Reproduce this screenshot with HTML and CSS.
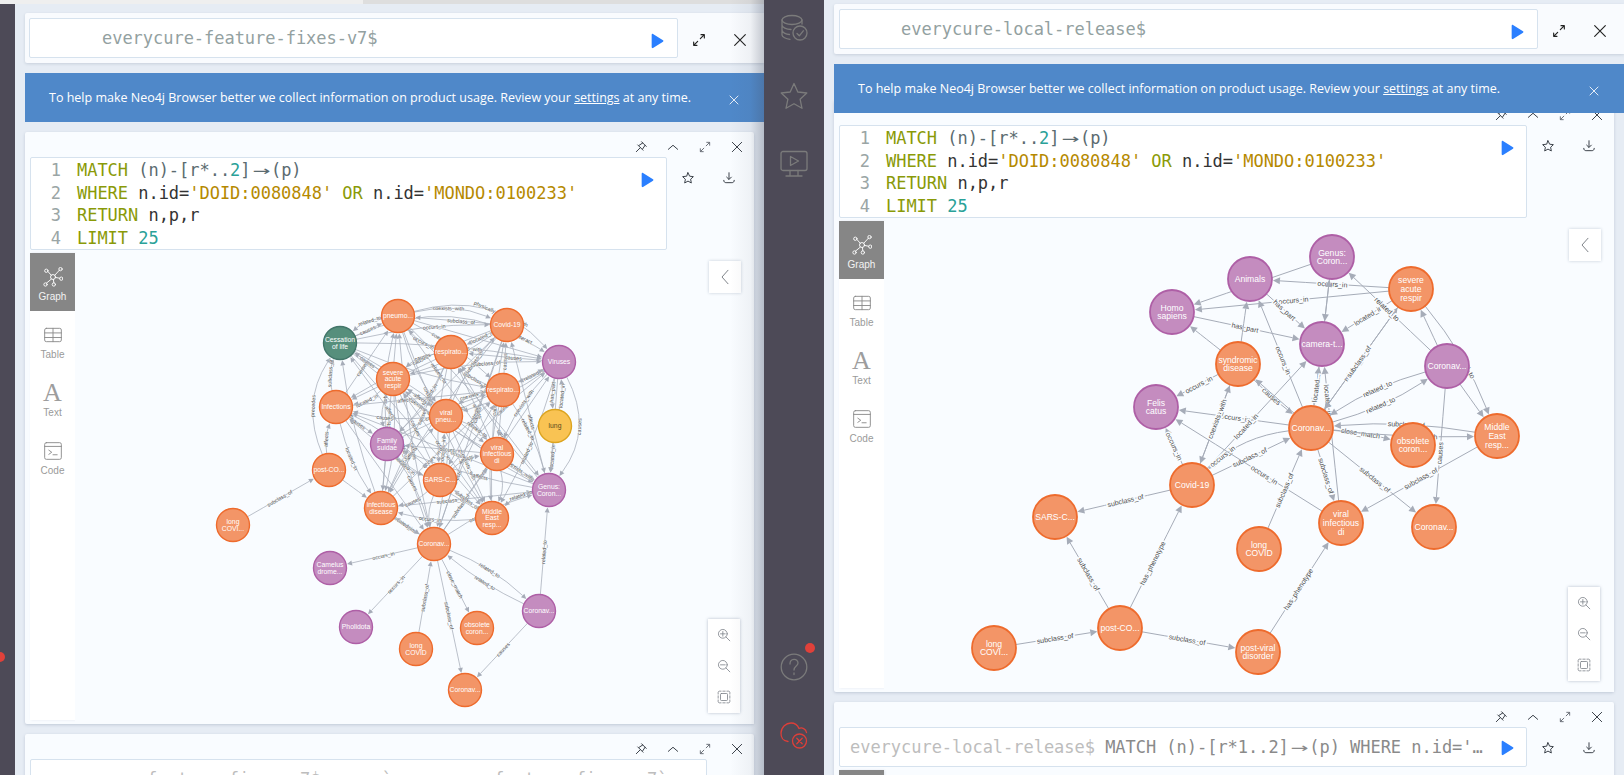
FILE: index.html
```html
<!DOCTYPE html>
<html lang="en">
<head>
  <meta charset="UTF-8">
  <title>Neo4j Browser</title>
  <link rel="stylesheet" href="styles.css">
</head>
<body>

<!-- shared icons -->
<svg class="icon-defs">
  <symbol id="i-pin" viewBox="0 0 24 24"><path d="M13 3l8 8M15 5l-6 4M19 9l-4 6M6.500 8.500l9 9M11 13l-7 7"/></symbol>
  <symbol id="i-up" viewBox="0 0 24 24"><path d="M4 16l8-7 8 7"/></symbol>
  <symbol id="i-expand" viewBox="0 0 24 24"><path d="M14 10l6-6M15 4h5v5M10 14l-6 6M4 15v5h5"/></symbol>
  <symbol id="i-close" viewBox="0 0 24 24"><path d="M4 4l16 16M20 4L4 20"/></symbol>
  <symbol id="i-play" viewBox="0 0 24 24"><path class="solid" d="M4 2.500c0-1 1-1.500 2-1l15 9.500c.8.500.8 1.500 0 2L6 22.500c-1 .5-2 0-2-1z"/></symbol>
  <symbol id="i-star" viewBox="0 0 24 24"><path d="M12 3l2.800 5.900 6.400.8-4.700 4.400 1.200 6.400L12 17.300l-5.700 3.200 1.200-6.400-4.700-4.400 6.400-.8z"/></symbol>
  <symbol id="i-down" viewBox="0 0 24 24"><path d="M12 3v11M8 10.500l4 4 4-4M3 16c0 3 2 4 4 4h10c2 0 4-1 4-4"/></symbol>
  <symbol id="i-zoomin" viewBox="0 0 24 24"><circle cx="10" cy="10" r="7.500"/><path d="M15.500 15.500L22 22M6 10h8M10 6v8"/></symbol>
  <symbol id="i-zoomout" viewBox="0 0 24 24"><circle cx="10" cy="10" r="7.500"/><path d="M15.500 15.500L22 22M6 10h8"/></symbol>
  <symbol id="i-fit" viewBox="0 0 24 24"><rect x="6" y="6" width="12" height="12" rx="1.500"/><path d="M2 7V4c0-1 1-2 2-2h3M17 2h3c1 0 2 1 2 2v3M22 17v3c0 1-1 2-2 2h-3M7 22H4c-1 0-2-1-2-2v-3M10 2h4M10 22h4M2 10v4M22 10v4"/></symbol>
  <symbol id="i-graph" viewBox="0 0 24 24"><circle cx="12" cy="12" r="3"/><circle cx="4" cy="4.500" r="2"/><circle cx="21" cy="2.500" r="2"/><circle cx="22" cy="14" r="2"/><circle cx="13" cy="21" r="2"/><circle cx="3" cy="21" r="2"/><path d="M6 5.500l4 4.500M14 10l6-6.500M15 12.500l5 1M12.500 15l.5 4M10 14.500l-6 5"/></symbol>
  <symbol id="i-table" viewBox="0 0 24 24"><rect x="2" y="4" width="20" height="16" rx="2"/><path d="M2 9.500h20M2 15h20M12 4v16"/></symbol>
  <symbol id="i-code" viewBox="0 0 24 24"><rect x="2" y="2" width="20" height="20" rx="2"/><path d="M2 6.500h20M7 11l3.500 2.500L7 16M12 16.500h5"/></symbol>
  <symbol id="i-back" viewBox="0 0 24 24"><path d="M16 3L8 12l8 9"/></symbol>
  <symbol id="i-db" viewBox="0 0 28 28"><ellipse cx="12" cy="6" rx="10" ry="4.500"/><path d="M2 6v15c0 2 4 4 8 4.300M22 6v4M2 11c0 2.500 4.500 4.500 9 4.500M2 16c0 2.500 4 4.500 7.500 4.500"/><circle cx="20" cy="19" r="7"/><path d="M17 19.500l2.300 2.300 4-5"/></symbol>
  <symbol id="i-fav" viewBox="0 0 28 28"><path d="M14 1.500l3.800 8.500 9 1-6.700 6.200 1.900 9.100L14 21.700l-8 4.600 1.900-9.100-6.700-6.200 9-1z"/></symbol>
  <symbol id="i-screen" viewBox="0 0 28 28"><rect x="1" y="1.500" width="26" height="19" rx="2"/><path d="M10.500 6.500l8 4.500-8 4.500zM10 20.500v5M18 20.500v5M6 26h16"/></symbol>
  <symbol id="i-help" viewBox="0 0 28 28"><circle cx="14" cy="14" r="12.800"/><path d="M10 11c0-6 8-6 8-1 0 3-4 3-4 7M14 20v1.500"/></symbol>
  <symbol id="i-offline" viewBox="0 0 28 28"><path d="M8 20.500C3 20 0.800 16 1 12 1.300 6 6 2 11 2c3.500 0 6.500 2 8 5.500 3-1.500 7 .5 7.500 4"/><circle cx="19.500" cy="20" r="7"/><path d="M16.800 17.300l5.400 5.400M22.200 17.300l-5.400 5.400"/></symbol>
</svg>

<div class="screen">

  <!-- left browser window -->
  <section class="window window-left">
    <div class="topstrip"></div>
    <div class="window-body">
      <div class="rail"><span class="rail-dot"></span></div>
      <main class="stream">
        <div class="cmdbar">
          <div class="cmd-input"><span class="prompt">everycure-feature-fixes-v7$</span><svg class="ico play"><use href="#i-play"/></svg></div>
          <div class="cmd-actions">
            <svg class="ico"><use href="#i-expand"/></svg>
            <svg class="ico"><use href="#i-close"/></svg>
          </div>
        </div>
        <div class="banner">
          <p>To help make Neo4j Browser better we collect information on product usage. Review your <a href="#">settings</a> at any time.</p>
          <svg class="ico banner-x"><use href="#i-close"/></svg>
        </div>

        <article class="card">
          <div class="card-head">
            <svg class="ico"><use href="#i-pin"/></svg>
            <svg class="ico"><use href="#i-up"/></svg>
            <svg class="ico faint"><use href="#i-expand"/></svg>
            <svg class="ico"><use href="#i-close"/></svg>
          </div>
          <div class="editor-row">
            <div class="editor">
              <div class="line"><span class="ln">1</span><span class="kw">MATCH</span> <span class="pn">(n)-[r*..<span class="num">2</span>]<span class="arrow">→</span>(p)</span></div>
              <div class="line"><span class="ln">2</span><span class="kw">WHERE</span> n.id=<span class="str">'DOID:0080848'</span> <span class="kw">OR</span> n.id=<span class="str">'MONDO:0100233'</span></div>
              <div class="line"><span class="ln">3</span><span class="kw">RETURN</span> n,p,r</div>
              <div class="line"><span class="ln">4</span><span class="kw">LIMIT</span> <span class="num">25</span></div>
              <svg class="ico play"><use href="#i-play"/></svg>
            </div>
            <div class="editor-actions">
              <svg class="ico"><use href="#i-star"/></svg>
              <svg class="ico"><use href="#i-down"/></svg>
            </div>
          </div>
          <div class="result">
            <nav class="tabs">
              <div class="tab active"><svg class="ico"><use href="#i-graph"/></svg><span>Graph</span></div>
              <div class="tab"><svg class="ico"><use href="#i-table"/></svg><span>Table</span></div>
              <div class="tab"><span class="tab-a">A</span><span>Text</span></div>
              <div class="tab"><svg class="ico"><use href="#i-code"/></svg><span>Code</span></div>
            </nav>
            <div class="viz">
              <svg class="graph" id="graphLeft" viewBox="75 253 679 471"></svg>
              <button class="side-toggle"><svg class="ico"><use href="#i-back"/></svg></button>
              <div class="zoom-box">
                <svg class="ico"><use href="#i-zoomin"/></svg>
                <svg class="ico"><use href="#i-zoomout"/></svg>
                <svg class="ico"><use href="#i-fit"/></svg>
              </div>
            </div>
          </div>
        </article>

        <article class="card card-tail">
          <div class="card-head">
            <svg class="ico"><use href="#i-pin"/></svg>
            <svg class="ico"><use href="#i-up"/></svg>
            <svg class="ico faint"><use href="#i-expand"/></svg>
            <svg class="ico"><use href="#i-close"/></svg>
          </div>
          <div class="editor single wide">
            <span class="prompt-dim">everycure-feature-fixes-v7$</span> :use `everycure-feature-fixes-v7`
          </div>
        </article>
      </main>
    </div>
  </section>

  <!-- dark sidebar of the right window -->
  <aside class="sidebar">
    <div class="side-group">
      <svg class="side-ico"><use href="#i-db"/></svg>
      <svg class="side-ico"><use href="#i-fav"/></svg>
      <svg class="side-ico"><use href="#i-screen"/></svg>
    </div>
    <div class="side-group bottom">
      <div class="help"><svg class="side-ico"><use href="#i-help"/></svg><span class="help-dot"></span></div>
      <svg class="side-ico red"><use href="#i-offline"/></svg>
    </div>
  </aside>

  <!-- right browser window -->
  <section class="window window-right">
    <main class="stream">
      <div class="cmdbar">
        <div class="cmd-input"><span class="prompt">everycure-local-release$</span><svg class="ico play"><use href="#i-play"/></svg></div>
        <div class="cmd-actions">
          <svg class="ico"><use href="#i-expand"/></svg>
          <svg class="ico"><use href="#i-close"/></svg>
        </div>
      </div>
      <div class="banner">
        <p>To help make Neo4j Browser better we collect information on product usage. Review your <a href="#">settings</a> at any time.</p>
        <svg class="ico banner-x"><use href="#i-close"/></svg>
      </div>

      <article class="card">
        <div class="card-head">
          <svg class="ico"><use href="#i-pin"/></svg>
          <svg class="ico"><use href="#i-up"/></svg>
          <svg class="ico faint"><use href="#i-expand"/></svg>
          <svg class="ico"><use href="#i-close"/></svg>
        </div>
        <div class="editor-row">
          <div class="editor">
            <div class="line"><span class="ln">1</span><span class="kw">MATCH</span> <span class="pn">(n)-[r*..<span class="num">2</span>]<span class="arrow">→</span>(p)</span></div>
            <div class="line"><span class="ln">2</span><span class="kw">WHERE</span> n.id=<span class="str">'DOID:0080848'</span> <span class="kw">OR</span> n.id=<span class="str">'MONDO:0100233'</span></div>
            <div class="line"><span class="ln">3</span><span class="kw">RETURN</span> n,p,r</div>
            <div class="line"><span class="ln">4</span><span class="kw">LIMIT</span> <span class="num">25</span></div>
            <svg class="ico play"><use href="#i-play"/></svg>
          </div>
          <div class="editor-actions">
            <svg class="ico"><use href="#i-star"/></svg>
            <svg class="ico"><use href="#i-down"/></svg>
          </div>
        </div>
        <div class="result">
          <nav class="tabs">
            <div class="tab active"><svg class="ico"><use href="#i-graph"/></svg><span>Graph</span></div>
            <div class="tab"><svg class="ico"><use href="#i-table"/></svg><span>Table</span></div>
            <div class="tab"><span class="tab-a">A</span><span>Text</span></div>
            <div class="tab"><svg class="ico"><use href="#i-code"/></svg><span>Code</span></div>
          </nav>
          <div class="viz">
            <svg class="graph" id="graphRight" viewBox="884 221 730 471"></svg>
            <button class="side-toggle"><svg class="ico"><use href="#i-back"/></svg></button>
            <div class="zoom-box">
              <svg class="ico"><use href="#i-zoomin"/></svg>
              <svg class="ico"><use href="#i-zoomout"/></svg>
              <svg class="ico"><use href="#i-fit"/></svg>
            </div>
          </div>
        </div>
      </article>

      <article class="card card-tail">
        <div class="card-head">
          <svg class="ico"><use href="#i-pin"/></svg>
          <svg class="ico"><use href="#i-up"/></svg>
          <svg class="ico faint"><use href="#i-expand"/></svg>
          <svg class="ico"><use href="#i-close"/></svg>
        </div>
        <div class="editor-row">
          <div class="editor single">
            <span class="prompt-dim">everycure-local-release$</span> MATCH (n)-[r*1..2]<span class="arrow">→</span>(p) WHERE n.id='…
            <svg class="ico play"><use href="#i-play"/></svg>
          </div>
          <div class="editor-actions">
            <svg class="ico"><use href="#i-star"/></svg>
            <svg class="ico"><use href="#i-down"/></svg>
          </div>
        </div>
        <div class="result"><nav class="tabs"><div class="tab active"></div></nav></div>
      </article>
    </main>
  </section>
</div>

<script src="graph.js"></script>
</body>
</html>
```

FILE: styles.css
```css
* {
  box-sizing: border-box;
}

html, body {
  margin: 0;
  padding: 0;
  height: 775px;
  overflow: hidden;
}

body {
  font-family: "Liberation Sans", Arial, sans-serif;
  background: #e6ecf4;
}

.icon-defs {
  display: none;
}

.ico {
  width: 14px;
  height: 14px;
  flex: none;
  fill: none;
  stroke: #3a4048;
  stroke-width: 1.7;
  stroke-linecap: round;
  stroke-linejoin: round;
  display: block;
}

.ico.play {
  width: 16px;
  height: 16px;
}

.ico .solid, .solid {
  fill: #2a7fff;
  stroke: none;
}

.screen {
  display: flex;
  width: 1624px;
  height: 775px;
}

.window {
  display: flex;
  flex-direction: column;
  overflow: hidden;
  height: 775px;
}

.window-left {
  width: 764px;
  position: relative;
}

/* shadow the right window throws over the left one */
.window-left::after {
  content: "";
  position: absolute;
  top: 0;
  right: 0;
  bottom: 0;
  width: 34px;
  background: linear-gradient(to right, rgba(70,80,100,0), rgba(70,80,100,0.06) 60%, rgba(70,80,100,0.3));
  pointer-events: none;
  z-index: 5;
}

.window-right {
  width: 800px;
}

.topstrip {
  height: 4px;
  flex: none;
  background: linear-gradient(to right, #efefef 363px, #dedede 363px);
}

.window-body {
  display: flex;
  flex: 1;
  min-height: 0;
}

.rail {
  width: 15px;
  flex: none;
  background: #4d4a57;
  position: relative;
}

.rail-dot {
  position: absolute;
  left: -5px;
  top: 648px;
  width: 10px;
  height: 10px;
  border-radius: 50%;
  background: #e0413a;
}

.stream {
  flex: 1;
  min-width: 0;
  padding: 4px 0 0 10px;
  background: #e6ecf4;
}

.window-left .stream {
  padding-top: 9px;
}

/* command bar */
.cmdbar {
  display: flex;
  height: 50px;
  padding: 5px 0 5px 4px;
  background: #f9fbfe;
  border-radius: 2px 0 0 2px;
  box-shadow: 0 1px 3px rgba(80,100,130,0.2);
}

.window-right .cmdbar {
  padding-left: 5px;
}

.cmd-input {
  flex: 1;
  display: flex;
  align-items: center;
  justify-content: space-between;
  background: #fff;
  border: 1px solid #d6e2ee;
  border-radius: 2px;
  padding: 0 12px 0 72px;
  height: 40px;
}

.window-right .cmd-input {
  padding-left: 61px;
}

.prompt {
  font-family: "DejaVu Sans Mono", monospace;
  font-size: 17px;
  letter-spacing: -0.03px;
  color: #93a1a1;
}

.cmd-input .play {
  margin-top: 6px;
}

.cmd-actions {
  width: 86px;
  flex: none;
  display: flex;
  gap: 25px;
  padding: 14px 0 0 13px;
}

.cmd-actions .ico {
  width: 16px;
  height: 16px;
  stroke: #222;
}

.banner {
  height: 49px;
  margin-top: 10px;
  padding: 0 22px 0 24px;
  background: #4f88c9;
  color: #fff;
  display: flex;
  align-items: center;
  justify-content: space-between;
  position: relative;
  z-index: 2;
}

.banner p {
  margin: 0;
  font-size: 12.5px;
  font-family: "Open Sans", sans-serif;
}

.banner a {
  color: #fff;
}

.banner-x {
  width: 12px;
  height: 12px;
  margin-top: 5px;
  margin-right: 2px;
  stroke: #fff;
}

/* result frames */
.card {
  margin-top: 10px;
  margin-right: 10px;
  height: 592px;
  padding: 0 0 0 5px;
  background: #f9fcff;
  border-radius: 2px;
  box-shadow: 0 1px 3px rgba(80,100,130,0.25);
}

.window-right .card {
  margin-top: -13px;
}

.window-right .card-tail, .card-tail {
  margin-top: 10px;
}

.card-head {
  height: 25px;
  display: flex;
  justify-content: flex-end;
  align-items: center;
  gap: 18px;
  padding: 5px 10px 0 0;
}

.card-head .ico.faint {
  stroke: #6b7078;
}

.editor-row {
  display: flex;
}

.editor {
  flex: 1;
  min-width: 0;
  position: relative;
  height: 93px;
  padding: 1px 0 0;
  background: #fff;
  border: 1px solid #d6e2ee;
  border-radius: 2px;
  font-family: "DejaVu Sans Mono", monospace;
  font-size: 17px;
  letter-spacing: -0.03px;
  color: #333;
}

.editor .play {
  position: absolute;
  right: 11px;
  top: 14px;
}

.editor-actions {
  width: 87px;
  flex: none;
  display: flex;
  gap: 27px;
  padding: 14px 0 0 14px;
}

.line {
  height: 22.7px;
  line-height: 22.7px;
  white-space: pre;
}

.ln {
  display: inline-block;
  width: 30px;
  margin-right: 16px;
  text-align: right;
  color: #9aa5a5;
}

.kw {
  color: #8a9a08;
}

.str {
  color: #b58900;
}

.num {
  color: #2aa198;
}

.pn {
  color: #5b6b70;
}

.arrow {
  display: inline-block;
  width: 20.4px;
  text-align: center;
  transform: scaleX(1.7);
}

.editor.single {
  height: 40px;
  line-height: 38px;
  padding: 0 0 0 10px;
  white-space: nowrap;
  color: #8a8a8a;
}

.editor.wide {
  flex: none;
  width: 677px;
  padding-left: 14px;
  color: #bdbdbd;
}

.prompt-dim {
  color: #bdbdbd;
}

.card-tail .editor .play {
  top: 12px;
}

.result {
  display: flex;
  height: 471px;
  margin-top: 3px;
}

.tabs {
  width: 45px;
  flex: none;
  height: 467px;
  background: #fff;
  box-shadow: 1px 0 2px rgba(80,100,130,0.12);
}

.tab {
  height: 58px;
  padding-top: 14px;
  display: flex;
  flex-direction: column;
  align-items: center;
  color: #9a9a9a;
  font-size: 10px;
}

.tab span {
  margin-top: 3px;
  line-height: 13px;
}

.tab .ico {
  width: 20px;
  height: 20px;
  stroke: #8a8a8a;
  stroke-width: 1.1;
}

.tab.active {
  background: #868686;
  color: #f3f3f3;
}

.tab.active .ico {
  stroke: #fff;
}

.tab .tab-a {
  margin-top: 0;
  font-family: "Liberation Serif", serif;
  font-size: 26px;
  line-height: 20px;
  height: 20px;
  color: #9d9d9d;
}

.viz {
  flex: 1;
  min-width: 0;
  position: relative;
  background: #f9fcff;
}

.graph {
  display: block;
  width: 100%;
  height: 100%;
}

.side-toggle {
  position: absolute;
  top: 8px;
  right: 13px;
  width: 32px;
  height: 32px;
  padding: 0;
  border: none;
  background: #fff;
  box-shadow: 0 0 3px rgba(80,100,130,0.3);
  display: flex;
  align-items: center;
  justify-content: center;
}

.side-toggle .ico {
  width: 18px;
  height: 18px;
  stroke: #70757c;
  stroke-width: 1.2;
}

.zoom-box {
  position: absolute;
  right: 14px;
  bottom: 11px;
  width: 32px;
  height: 94px;
  background: #fff;
  box-shadow: 0 0 3px rgba(80,100,130,0.4);
  display: flex;
  flex-direction: column;
  align-items: center;
  gap: 17px;
  padding-top: 9px;
}

.zoom-box .ico {
  stroke: #7d8289;
  stroke-width: 1.4;
}

/* dark middle sidebar */
.sidebar {
  width: 60px;
  flex: none;
  background: #4d4a57;
  display: flex;
  flex-direction: column;
  justify-content: space-between;
  position: relative;
  z-index: 6;
}

.side-group {
  display: flex;
  flex-direction: column;
  align-items: center;
  gap: 40px;
  padding-top: 14px;
}

.side-group.bottom {
  padding: 0 0 26px;
}

.side-ico {
  width: 28px;
  height: 28px;
  display: block;
  fill: none;
  stroke: #7b7b7b;
  stroke-width: 1.3;
  stroke-linecap: round;
  stroke-linejoin: round;
}

.side-ico.red {
  stroke: #dd3f39;
}

.help {
  position: relative;
}

.help-dot {
  position: absolute;
  right: -7px;
  top: -10px;
  width: 10px;
  height: 10px;
  border-radius: 50%;
  background: #e0413a;
}

/* graph styling */
.edge {
  fill: none;
  stroke: #a6acb8;
}

.arrowhead {
  fill: #a6acb8;
}

.edge-label {
  fill: #4d4d4d;
  stroke: #f9fcff;
  paint-order: stroke;
  text-anchor: middle;
  dominant-baseline: central;
  font-family: "Liberation Sans", sans-serif;
}

.node-label {
  fill: #fff;
  text-anchor: middle;
  font-family: "Liberation Sans", sans-serif;
}

.node.orange { fill: #f39567; stroke: #ee6b2d; }
.node.purple { fill: #c48cbf; stroke: #ae5fa6; }
.node.green { fill: #568f7c; stroke: #43766a; }
.node.yellow { fill: #f9c353; stroke: #dca41f; }
.node-label.dark { fill: #5a4a1e; }
```

FILE: graph.js
```js
// draws the two Neo4j result graphs from plain node and edge lists
const SVG_NS = 'http://www.w3.org/2000/svg';

function el(name, attrs, parent) {
  const e = document.createElementNS(SVG_NS, name);
  for (const k in attrs) e.setAttribute(k, attrs[k]);
  parent.appendChild(e);
  return e;
}

function unit(dx, dy) {
  const l = Math.hypot(dx, dy) || 1;
  return [dx / l, dy / l];
}

function drawGraph(id, opts, nodes, edges) {
  const svg = document.getElementById(id);
  const r = opts.r;

  edges.forEach(([from, to, label, curve = 0, at = 0.5]) => {
    const a = nodes[from], b = nodes[to];
    const [ux, uy] = unit(b.x - a.x, b.y - a.y);
    const cx = (a.x + b.x) / 2 - uy * curve;
    const cy = (a.y + b.y) / 2 + ux * curve;
    const [sx, sy] = unit(cx - a.x, cy - a.y);
    const [ex, ey] = unit(cx - b.x, cy - b.y);
    const x1 = a.x + sx * r, y1 = a.y + sy * r;
    const tipx = b.x + ex * (r + 1), tipy = b.y + ey * (r + 1);
    const x2 = tipx + ex * opts.arrow, y2 = tipy + ey * opts.arrow;

    el('path', {
      class: 'edge',
      d: `M${x1} ${y1}Q${cx} ${cy} ${x2} ${y2}`,
      'stroke-width': opts.line
    }, svg);

    const w = opts.arrow * 0.5;
    el('polygon', {
      class: 'arrowhead',
      points: `${tipx},${tipy} ${x2 - ey * w},${y2 + ex * w} ${x2 + ey * w},${y2 - ex * w}`
    }, svg);

    if (label) {
      const s = 1 - at;
      const lx = s * s * x1 + 2 * s * at * cx + at * at * x2;
      const ly = s * s * y1 + 2 * s * at * cy + at * at * y2;
      let ang = Math.atan2(s * (cy - y1) + at * (y2 - cy), s * (cx - x1) + at * (x2 - cx)) * 180 / Math.PI;
      if (ang > 90) ang -= 180;
      if (ang < -90) ang += 180;
      const t = el('text', {
        class: 'edge-label',
        x: lx,
        y: ly,
        'font-size': opts.edgeFont,
        'stroke-width': opts.halo,
        transform: `rotate(${ang} ${lx} ${ly})`
      }, svg);
      t.textContent = label;
    }
  });

  Object.values(nodes).forEach(n => {
    el('circle', { class: 'node ' + n.c, cx: n.x, cy: n.y, r: r, 'stroke-width': opts.ring }, svg);
    const lines = n.t.split('|');
    lines.forEach((line, i) => {
      const y = n.y + (i - (lines.length - 1) / 2) * opts.leading + opts.font * 0.36;
      const t = el('text', {
        class: 'node-label' + (n.c === 'yellow' ? ' dark' : ''),
        x: n.x,
        y: y,
        'font-size': opts.font
      }, svg);
      t.textContent = line;
    });
  });
}

// right window
const rightNodes = {
  genus: { x: 1332, y: 257, c: 'purple', t: 'Genus:|Coron...' },
  animals: { x: 1250, y: 279, c: 'purple', t: 'Animals' },
  homo: { x: 1172, y: 312, c: 'purple', t: 'Homo|sapiens' },
  severe: { x: 1411, y: 289, c: 'orange', t: 'severe|acute|respir' },
  camera: { x: 1322, y: 344, c: 'purple', t: 'camera-t...' },
  synd: { x: 1238, y: 364, c: 'orange', t: 'syndromic|disease' },
  virus: { x: 1447, y: 366, c: 'purple', t: 'Coronav...' },
  felis: { x: 1156, y: 407, c: 'purple', t: 'Felis|catus' },
  center: { x: 1311, y: 428, c: 'orange', t: 'Coronav...' },
  obsolete: { x: 1413, y: 445, c: 'orange', t: 'obsolete|coron...' },
  middle: { x: 1497, y: 436, c: 'orange', t: 'Middle|East|resp...' },
  covid: { x: 1192, y: 485, c: 'orange', t: 'Covid-19' },
  sars: { x: 1055, y: 517, c: 'orange', t: 'SARS-C...' },
  viral: { x: 1341, y: 523, c: 'orange', t: 'viral|infectious|di' },
  coro2: { x: 1434, y: 527, c: 'orange', t: 'Coronav...' },
  longc: { x: 1259, y: 549, c: 'orange', t: 'long|COVID' },
  post: { x: 1120, y: 628, c: 'orange', t: 'post-CO...' },
  longv: { x: 994, y: 648, c: 'orange', t: 'long|COVI...' },
  postv: { x: 1258, y: 652, c: 'orange', t: 'post-viral|disorder' }
};

const rightEdges = [
  ['severe', 'animals', 'occurs_in'],
  ['severe', 'homo', 'occurs_in'],
  ['genus', 'homo'],
  ['animals', 'camera', 'has_part'],
  ['homo', 'camera', 'has_part'],
  ['synd', 'homo'],
  ['synd', 'animals'],
  ['synd', 'felis', 'occurs_in'],
  ['center', 'animals', 'occurs_in', 0, 0.45],
  ['camera', 'center'],
  ['center', 'camera', 'located...'],
  ['viral', 'camera', 'located_in', 0, 0.78],
  ['camera', 'genus'],
  ['genus', 'camera'],
  ['severe', 'camera', 'located_in'],
  ['center', 'severe', 'related_to', 0, 0.42],
  ['severe', 'center', 'subclass_of', 0, 0.55],
  ['virus', 'genus', 'related_to', 0, 0.55],
  ['virus', 'severe'],
  ['severe', 'middle', 'related_to', -14, 0.58],
  ['virus', 'center', 'related_to', 12],
  ['center', 'virus', 'related_to', 12],
  ['middle', 'center', 'subclass_of', 12],
  ['virus', 'middle'],
  ['virus', 'coro2', 'causes', 0, 0.58],
  ['center', 'obsolete', 'close_match', -4, 0.5],
  ['center', 'middle', 'close_match', 6, 0.62],
  ['center', 'felis', 'occurs_in'],
  ['covid', 'center', 'subclass_of'],
  ['synd', 'center', 'causes', 3],
  ['center', 'synd'],
  ['covid', 'camera', 'located_in', 0, 0.4],
  ['covid', 'synd', 'causes', 0, 0.55],
  ['synd', 'covid', 'coexists_with', 0, 0.45],
  ['center', 'covid', 'occurs_in', 22, 0.85],
  ['covid', 'felis', 'occurs_in', 0, 0.55],
  ['viral', 'felis', 'occurs_in', 0, 0.4],
  ['longc', 'center', 'subclass_of'],
  ['center', 'viral', 'subclass_of', 0, 0.55],
  ['center', 'coro2', 'subclass_of', 0, 0.55],
  ['middle', 'viral', 'subclass_of'],
  ['covid', 'sars', 'subclass_of'],
  ['post', 'sars', 'subclass_of'],
  ['post', 'covid', 'has_phenotype', 0, 0.45],
  ['longv', 'post', 'subclass_of'],
  ['post', 'postv', 'subclass_of'],
  ['postv', 'viral', 'has_phenotype']
];

drawGraph('graphRight', { r: 22, line: 1, ring: 1.8, arrow: 7, font: 8.6, leading: 8.8, edgeFont: 7, halo: 3 }, rightNodes, rightEdges);

// left window
const leftNodes = {
  pneumo: { x: 398, y: 316, c: 'orange', t: 'pneumo...' },
  covid: { x: 507, y: 325, c: 'orange', t: 'Covid-19' },
  death: { x: 340, y: 343, c: 'green', t: 'Cessation|of life' },
  resp1: { x: 451, y: 352, c: 'orange', t: 'respirato...' },
  viruses: { x: 559, y: 362, c: 'purple', t: 'Viruses' },
  severe: { x: 393, y: 379, c: 'orange', t: 'severe|acute|respir' },
  resp2: { x: 503, y: 390, c: 'orange', t: 'respirato...' },
  infect: { x: 336, y: 407, c: 'orange', t: 'Infections' },
  viralp: { x: 446, y: 416, c: 'orange', t: 'viral|pneu...' },
  lung: { x: 555, y: 426, c: 'yellow', t: 'lung' },
  suidae: { x: 387, y: 444, c: 'purple', t: 'Family|suidae' },
  viral: { x: 497, y: 454, c: 'orange', t: 'viral|infectious|di' },
  post: { x: 329, y: 470, c: 'orange', t: 'post-CO...' },
  sars: { x: 440, y: 480, c: 'orange', t: 'SARS-C...' },
  genus: { x: 549, y: 490, c: 'purple', t: 'Genus:|Coron...' },
  infd: { x: 381, y: 508, c: 'orange', t: 'infectious|disease' },
  middle: { x: 492, y: 518, c: 'orange', t: 'Middle|East|resp...' },
  longv: { x: 233, y: 525, c: 'orange', t: 'long|COVI...' },
  center: { x: 434, y: 544, c: 'orange', t: 'Coronav...' },
  camel: { x: 330, y: 568, c: 'purple', t: 'Camelus|drome...' },
  pholi: { x: 356, y: 627, c: 'purple', t: 'Pholidota' },
  longc: { x: 416, y: 649, c: 'orange', t: 'long|COVID' },
  obsolete: { x: 477, y: 628, c: 'orange', t: 'obsolete|coron...' },
  virus: { x: 539, y: 611, c: 'purple', t: 'Coronav...' },
  coro2: { x: 465, y: 690, c: 'orange', t: 'Coronav...' }
};

const leftEdges = [
  ['longv', 'post', 'subclass_of'],
  ['center', 'camel', 'occurs_in'],
  ['center', 'pholi', 'occurs_in'],
  ['longc', 'center', 'subclass_of'],
  ['center', 'coro2', 'subclass_of'],
  ['center', 'obsolete', 'close_match'],
  ['center', 'virus', 'related_to', -12],
  ['virus', 'center', 'related_to', -8],
  ['virus', 'genus', 'related_to'],
  ['virus', 'coro2', 'causes'],
  ['center', 'infd', 'causes'],
  ['post', 'death', 'precedes', -34],
  ['post', 'infd'],
  ['post', 'infect', 'affects', -8],
  ['viruses', 'genus', 'causes', -40],
  ['pneumo', 'viruses', 'physically_interacts_with', -52, 0.62],
  ['death', 'viruses', 'physically_interact...', -62, 0.85],
  ['death', 'pneumo', 'causes'],
  ['pneumo', 'covid', 'coexists_with', -18, 0.45],
  ['lung', 'genus', 'located_in'],
  ['viruses', 'lung', 'has_part', 6],
  ['lung', 'viruses', 'located_in', 6]
];

// the dense core: pairs of the inner nodes, picked by a fixed rule
const core = ['pneumo', 'covid', 'death', 'resp1', 'viruses', 'severe', 'resp2', 'infect', 'viralp', 'suidae', 'viral', 'sars', 'genus', 'infd', 'middle', 'center'];
const words = ['causes', 'subclass_of', 'related_to', 'occurs_in', 'located_in', 'affects', 'coexists_with', 'causes'];
core.forEach((a, i) => {
  core.forEach((b, j) => {
    if (j <= i) return;
    const pick = (i * 7 + j * 13) % 6;
    if (pick > 4) return;
    const bend = ((i + j) % 3 - 1) * 10;
    const from = pick % 2 ? b : a, to = pick % 2 ? a : b;
    const hasLabel = (i + j * 3) % 4 !== 0;
    leftEdges.push([from, to, hasLabel ? words[(i + j) % words.length] : null, bend, 0.4 + ((i * j) % 3) * 0.1]);
  });
});

drawGraph('graphLeft', { r: 16.5, line: 0.75, ring: 1.4, arrow: 5, font: 6.8, leading: 6.5, edgeFont: 5.3, halo: 0.6 }, leftNodes, leftEdges);
```
